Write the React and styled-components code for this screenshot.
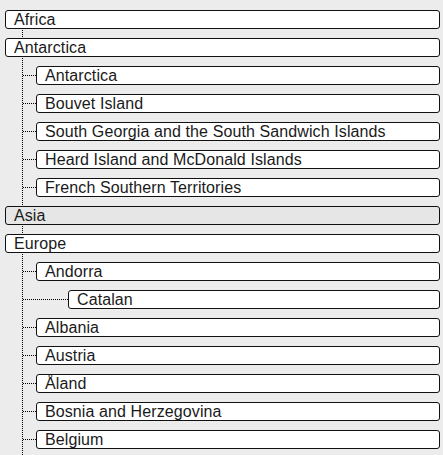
import React from 'react'
import styled, { createGlobalStyle } from 'styled-components'

const GlobalStyle = createGlobalStyle`
  html, body {
    margin: 0;
    padding: 0;
    background: #ececec;
    overflow: hidden;
  }
`

const tree = [
  { name: 'Africa', children: [] },
  {
    name: 'Antarctica',
    children: [
      { name: 'Antarctica' },
      { name: 'Bouvet Island' },
      { name: 'South Georgia and the South Sandwich Islands' },
      { name: 'Heard Island and McDonald Islands' },
      { name: 'French Southern Territories' },
    ],
  },
  { name: 'Asia', active: true, children: [] },
  {
    name: 'Europe',
    children: [
      { name: 'Andorra', children: [{ name: 'Catalan' }] },
      { name: 'Albania' },
      { name: 'Austria' },
      { name: 'Åland' },
      { name: 'Bosnia and Herzegovina' },
      { name: 'Belgium' },
    ],
  },
]

function Branch({ node, depth }) {
  return (
    <>
      <ChildRow>
        <Connector depth={depth} />
        <NodeBox>{node.name}</NodeBox>
      </ChildRow>
      {(node.children || []).map((c, i) => (
        <Branch key={i} node={c} depth={depth + 1} />
      ))}
    </>
  )
}

export default function App() {
  return (
    <>
      <GlobalStyle />
      <Tree>
        {tree.map((region, i) => (
          <React.Fragment key={i}>
            <TopRow>
              <NodeBox active={region.active}>{region.name}</NodeBox>
            </TopRow>
            {region.children.map((c, j) => (
              <Branch key={j} node={c} depth={1} />
            ))}
          </React.Fragment>
        ))}
      </Tree>
    </>
  )
}

const Tree = styled.div`
  margin: 10px 3px 0 22px;
  border-left: 1px dotted #000;
  display: flex;
  flex-direction: column;
  gap: 9px;
  padding-bottom: 40px;
`

const TopRow = styled.div`
  display: flex;
  margin-left: -18px;
`

const ChildRow = styled.div`
  display: flex;
  align-items: center;
`

const Connector = styled.div`
  width: ${p => p.depth * 32 - 19}px;
  flex: none;
  border-top: 1px dotted #000;
`

const NodeBox = styled.div`
  flex: 1;
  box-sizing: border-box;
  height: 19px;
  padding: 0 8px;
  border: 1px solid #111;
  border-radius: 3px;
  background: ${p => (p.active ? '#e6e6e6' : '#fff')};
  font-family: 'Liberation Sans', Arial, sans-serif;
  font-size: 16px;
  letter-spacing: 0.1px;
  line-height: 17px;
  color: #1a1a1a;
  white-space: nowrap;
  overflow: hidden;
`
